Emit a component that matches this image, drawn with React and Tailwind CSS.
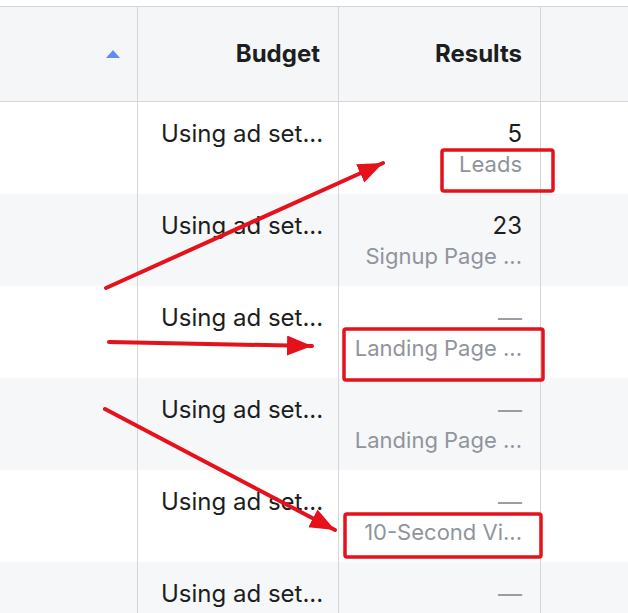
import React from 'react'

const ROWS = [
  { value: '5', label: 'Leads' },
  { value: '23', label: 'Signup Page ...' },
  { value: '—', label: 'Landing Page ...' },
  { value: '—', label: 'Landing Page ...' },
  { value: '—', label: '10-Second Vi...' },
  { value: '—', label: '' },
]

function Annotations() {
  return (
    <svg className="absolute inset-0 pointer-events-none" width="628" height="613" viewBox="0 0 628 613">
      <defs>
        <marker id="head" markerUnits="userSpaceOnUse" markerWidth="28" markerHeight="22" refX="25" refY="10" orient="auto">
          <path d="M0 0 L25 10 L0 20 Z" fill="#e5111b" />
        </marker>
      </defs>
      <g stroke="#e5111b" fill="none" strokeLinecap="round">
        <line x1="106" y1="288" x2="383" y2="163" strokeWidth="4" markerEnd="url(#head)" />
        <line x1="109" y1="342" x2="312" y2="346" strokeWidth="4" markerEnd="url(#head)" />
        <line x1="105" y1="409" x2="335" y2="530" strokeWidth="4" markerEnd="url(#head)" />
        <rect x="442" y="150" width="111" height="41" rx="2" strokeWidth="3.5" />
        <rect x="344" y="329" width="199" height="51" rx="2" strokeWidth="3.5" />
        <rect x="345" y="514" width="196" height="43" rx="2" strokeWidth="3.5" />
      </g>
    </svg>
  )
}

export default function App() {
  return (
    <div
      className="relative w-[628px] h-[613px] overflow-hidden bg-white text-[#1c1e21]"
      style={{ fontFamily: 'Inter, "Liberation Sans", Arial, sans-serif' }}
    >
      {/* header */}
      <div className="mt-[6px] flex h-[96px] border-y border-[#d4d6da] bg-[#f5f6f7]">
        <div className="w-[138px] shrink-0 border-r border-[#d4d6da] flex items-center justify-end pr-[17px]">
          <svg width="14" height="8" viewBox="0 0 14 8">
            <path d="M7 0 L14 8 L0 8 Z" fill="#5d8ff2" />
          </svg>
        </div>
        <div className="w-[201px] shrink-0 border-r border-[#d4d6da] flex items-center justify-end pr-[18px] text-[24px] font-bold">
          Budget
        </div>
        <div className="w-[202px] shrink-0 border-r border-[#d4d6da] flex items-center justify-end pr-[18px] text-[24px] font-bold">
          Results
        </div>
        <div className="flex-1" />
      </div>

      {/* rows */}
      {ROWS.map((r, i) => (
        <div key={i} className={`flex h-[92px] ${i % 2 ? 'bg-[#f6f7f9]' : 'bg-white'}`}>
          <div className="w-[138px] shrink-0 border-r border-[#d4d6da]" />
          <div className="w-[201px] shrink-0 border-r border-[#d4d6da] pl-[23px] pt-[16px] text-[24px] leading-[31px]">
            Using ad set...
          </div>
          <div className="w-[202px] shrink-0 border-r border-[#d4d6da] pr-[18px] pt-[16px] text-right leading-[31px]">
            <div className={`text-[24px] ${r.value === '—' ? 'text-[#9a9da2]' : ''}`}>{r.value}</div>
            <div className="text-[22px] text-[#90949c]">{r.label}</div>
          </div>
          <div className="flex-1" />
        </div>
      ))}

      <Annotations />
    </div>
  )
}
